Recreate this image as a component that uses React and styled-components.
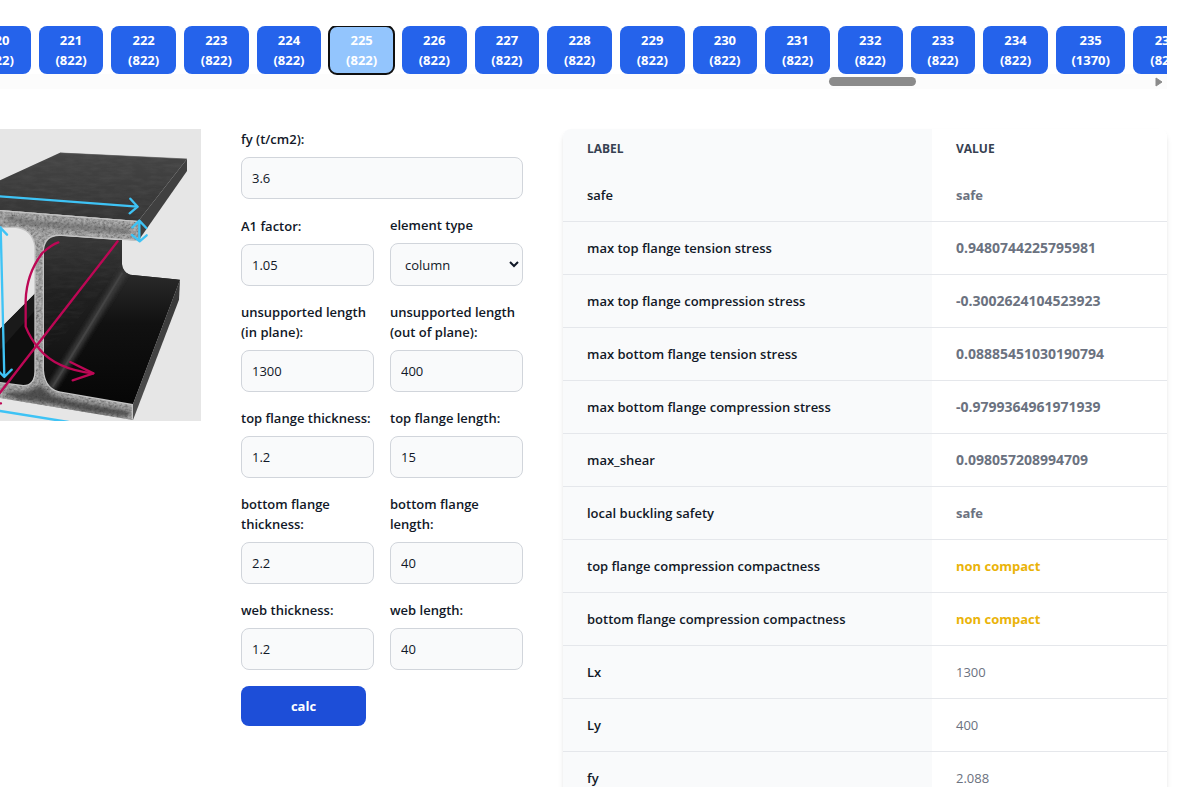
import React from "react";
import styled, { createGlobalStyle } from "styled-components";

const GlobalStyle = createGlobalStyle`
  *, *::before, *::after { box-sizing: border-box; }
  html { scrollbar-width: none; }
  body {
    margin: 0;
    background: #fff;
    color: #111827;
    font-family: "Segoe UI", "Open Sans", "Noto Sans", sans-serif;
    font-size: 13px;
    line-height: 20px;
    overflow-x: hidden;
  }
  button, input, select { font: inherit; color: inherit; margin: 0; }
`;

const Page = styled.div`
  padding: 26px 13px 0 0;
`;

const Strip = styled.nav`
  overflow: hidden;
`;

const CaseTrack = styled.div`
  display: flex;
  gap: 8px;
  margin: 0 -31px 0 -34px;
`;

const CaseButton = styled.button`
  flex: ${(p) => (p.$wide ? 70 : 65)} 1 0;
  min-width: 0;
  padding: 4px 0;
  border: 0;
  border-radius: 8px;
  background: ${(p) => (p.$active ? "#93c5fd" : "#2563eb")};
  color: #fff;
  font-size: 13px;
  font-weight: 700;
  text-align: center;
  outline: ${(p) => (p.$active ? "2px solid #101010" : "none")};
  outline-offset: -1px;
  span { display: block; }
`;

const ScrollBar = styled.div`
  display: grid;
  grid-template-columns: 829fr 87fr 239fr 8px;
  align-items: center;
  height: 15px;
  padding-right: 4px;
  background: #fcfcfc;
`;

const Thumb = styled.div`
  grid-column: 2;
  height: 9px;
  border-radius: 5px;
  background: #8b8b8b;
`;

const ScrollArrow = styled.svg`
  grid-column: 4;
  display: block;
`;

const Main = styled.main`
  display: grid;
  grid-template-columns: 201fr 282fr 604fr;
  gap: 40px;
  align-items: start;
  margin-top: 40px;
`;

const BeamSvg = styled.svg`
  display: block;
  width: 100%;
  height: auto;
`;

const Form = styled.form`
  display: grid;
  grid-template-columns: 1fr 1fr;
  gap: 16px;
  align-items: end;
`;

const Field = styled.div`
  grid-column: ${(p) => (p.$full ? "1 / -1" : "auto")};
  display: flex;
  flex-direction: column;
  gap: 8px;
  min-width: 0;
`;

const Label = styled.label`
  font-weight: 600;
`;

const Input = styled.input`
  width: 100%;
  height: 42px;
  padding: 10px;
  border: 1px solid #d1d5db;
  border-radius: 8px;
  background: #f9fafb;
`;

const Select = styled.select`
  width: 100%;
  height: 43px;
  padding: 10px 0 10px 10px;
  border: 1px solid #d1d5db;
  border-radius: 8px;
  background: #f9fafb;
`;

const CalcButton = styled.button`
  justify-self: start;
  width: 125px;
  height: 40px;
  border: 0;
  border-radius: 8px;
  background: #1d4ed8;
  color: #fff;
  font-weight: 700;
`;

const TableCard = styled.div`
  overflow: hidden;
  border-radius: 8px;
  box-shadow: 0 4px 6px -1px rgba(0, 0, 0, 0.1), 0 2px 4px -2px rgba(0, 0, 0, 0.1);
`;

const Table = styled.table`
  width: 100%;
  table-layout: fixed;
  border-collapse: separate;
  border-spacing: 0;
  text-align: left;
`;

const HeadCell = styled.th`
  width: ${(p) => (p.$shaded ? "auto" : "235px")};
  padding: 12px 24px;
  background: ${(p) => (p.$shaded ? "#f9fafb" : "#fff")};
  color: #374151;
  font-size: 12px;
  line-height: 16px;
  font-weight: 700;
  text-transform: uppercase;
`;

const RowLabel = styled.th`
  padding: 16px 24px;
  border-bottom: 1px solid #e5e7eb;
  background: #f9fafb;
  font-weight: 600;
  white-space: nowrap;
`;

const tones = {
  number: { color: "#6b7280", size: 14, weight: 700 },
  word: { color: "#6b7280", size: 13, weight: 700 },
  warn: { color: "#eab308", size: 13, weight: 700 },
  plain: { color: "#6b7280", size: 13, weight: 400 },
};

const RowValue = styled.td`
  padding: 16px 24px;
  border-bottom: 1px solid #e5e7eb;
  color: ${(p) => tones[p.$tone].color};
  font-size: ${(p) => tones[p.$tone].size}px;
  font-weight: ${(p) => tones[p.$tone].weight};
`;

const cases = Array.from({ length: 17 }, (_, i) => ({
  id: 220 + i,
  combo: 220 + i === 235 ? 1370 : 822,
}));

const fields = [
  { id: "fy", label: "fy (t/cm2):", value: "3.6", full: true },
  { id: "a1", label: "A1 factor:", value: "1.05" },
  { id: "type", label: "element type", options: ["column", "beam"] },
  { id: "lin", label: "unsupported length (in plane):", value: "1300" },
  { id: "lout", label: "unsupported length (out of plane):", value: "400" },
  { id: "tft", label: "top flange thickness:", value: "1.2" },
  { id: "tfl", label: "top flange length:", value: "15" },
  { id: "bft", label: "bottom flange thickness:", value: "2.2" },
  { id: "bfl", label: "bottom flange length:", value: "40" },
  { id: "wt", label: "web thickness:", value: "1.2" },
  { id: "wl", label: "web length:", value: "40" },
];

const results = [
  ["safe", "safe", "word"],
  ["max top flange tension stress", "0.9480744225795981", "number"],
  ["max top flange compression stress", "-0.3002624104523923", "number"],
  ["max bottom flange tension stress", "0.08885451030190794", "number"],
  ["max bottom flange compression stress", "-0.9799364961971939", "number"],
  ["max_shear", "0.098057208994709", "number"],
  ["local buckling safety", "safe", "word"],
  ["top flange compression compactness", "non compact", "warn"],
  ["bottom flange compression compactness", "non compact", "warn"],
  ["Lx", "1300", "plain"],
  ["Ly", "400", "plain"],
  ["fy", "2.088", "plain"],
];

const innerFace =
  "M130 395 Q150 375 185 377 L350 390 H366 V462 Q370 490 390 494 L540 509 L398 884 L185 848 Q140 840 131 790 Z";
const section =
  "M0 300 L415 333 V392 L185 376 Q135 372 130 420 V780 Q134 842 190 848 L398 884 L399 930 L0 864 V818 L70 827 Q104 826 105 785 V410 Q98 360 50 352 L0 352 Z";
const topFace = "M180 128 L561 147 L415 333 L0 300 V211 Z";

function BeamDrawing() {
  return (
    <BeamSvg viewBox="0 57 603 876" role="img" aria-label="I-beam section">
      <defs>
        <linearGradient id="topShade" x1="0" y1="0" x2="0" y2="1">
          <stop offset="0" stopColor="#454545" />
          <stop offset="1" stopColor="#343434" />
        </linearGradient>
        <linearGradient id="webShade" x1="0" y1="0" x2="0" y2="1">
          <stop offset="0" stopColor="#383838" />
          <stop offset="0.35" stopColor="#202020" />
          <stop offset="1" stopColor="#0b0b0b" />
        </linearGradient>
        <linearGradient id="lowerShade" x1="0" y1="0" x2="0" y2="1">
          <stop offset="0" stopColor="#2c2c2c" />
          <stop offset="0.4" stopColor="#111" />
          <stop offset="1" stopColor="#060606" />
        </linearGradient>
        <linearGradient id="edge" x1="0" y1="0" x2="0" y2="1">
          <stop offset="0" stopColor="#363636" />
          <stop offset="1" stopColor="#505050" />
        </linearGradient>
        <filter id="soft" x="-20%" y="-20%" width="140%" height="140%">
          <feGaussianBlur stdDeviation="7" />
        </filter>
        <filter id="steel" x="0" y="0" width="100%" height="100%">
          <feTurbulence type="fractalNoise" baseFrequency="0.12 0.14" numOctaves="3" seed="4" result="n" />
          <feColorMatrix in="n" type="matrix" values="1.2 0 0 0 -0.1  1.2 0 0 0 -0.1  1.2 0 0 0 -0.1  0 0 0 0 1" result="g" />
          <feComposite in="g" in2="SourceGraphic" operator="in" />
        </filter>
        <filter id="brushed" x="0" y="0" width="100%" height="100%">
          <feTurbulence type="fractalNoise" baseFrequency="0.02 0.08" numOctaves="3" seed="9" result="n" />
          <feColorMatrix in="n" type="matrix" values="0 0 0 0 0.5  0 0 0 0 0.5  0 0 0 0 0.5  0.7 0 0 0 -0.24" result="g" />
          <feComposite in="g" in2="SourceGraphic" operator="in" />
        </filter>
        <clipPath id="innerClip">
          <path d={innerFace} />
        </clipPath>
        <clipPath id="sectionClip">
          <path d={section} />
        </clipPath>
      </defs>
      <rect x="0" y="57" width="603" height="876" fill="#e6e6e6" />

      <path d="M0 656 L106 550 V780 Q104 828 70 828 L0 818 Z" fill="#0e0e0e" />
      <path d="M0 656 L106 550 V600 L0 720 Z" fill="#1a1a1a" />

      <path d={innerFace} fill="url(#webShade)" />
      <g clipPath="url(#innerClip)">
        <path d="M366 478 L150 826 L185 850 L398 884 L540 509 Z" fill="url(#lowerShade)" />
        <path d="M375 480 L150 840" stroke="#3a3a3a" strokeWidth="24" filter="url(#soft)" />
        <path d="M367 488 L158 830" stroke="#444" strokeWidth="6" />
        <path d="M131 400 L350 390 L366 470 L180 690 L131 720 Z" fill="#fff" filter="url(#brushed)" opacity="0.15" />
      </g>
      <path d="M540 509 L398 884 L399 930 L537 569 Z" fill="url(#edge)" />

      <path d={topFace} fill="url(#topShade)" />
      <path d={topFace} fill="#fff" filter="url(#brushed)" opacity="0.2" />
      <path d="M561 147 V183 L415 392 V333 Z" fill="#404040" />
      <path d="M180 129 L561 147" stroke="#555" strokeWidth="2" />

      <path d={section} fill="#7c7c7c" />
      <path d={section} fill="#fff" filter="url(#steel)" opacity="0.5" />
      <g clipPath="url(#sectionClip)">
        <path d="M20 850 L75 850 L120 832 L155 860 L205 874 L385 908 L380 916 L270 902 L160 878 L50 862 Z" fill="#333" stroke="#333" strokeWidth="10" opacity="0.75" filter="url(#soft)" />
        <path d="M20 325 L110 342 L230 350 L390 364" fill="none" stroke="#555" strokeWidth="16" opacity="0.6" filter="url(#soft)" />
        <path d="M117 540 V800" fill="none" stroke="#444" strokeWidth="8" opacity="0.5" filter="url(#soft)" />
      </g>
      <path
        d="M0 302 L415 335 M0 352 H48 Q98 358 105 410 V785 Q104 826 70 827 L0 818 M412 391 L185 376 Q135 372 130 420 V780 Q134 842 190 848 L397 884 V928"
        fill="none"
        stroke="#c4c4c4"
        strokeWidth="4"
      />

      <g fill="none" stroke="#3ec3f5" strokeWidth="7" strokeLinecap="round" strokeLinejoin="round">
        <path d="M0 259 L412 290 M391 266 L413 290 L389 310" />
        <path d="M418 334 V392 M397 352 L418 332 L439 354 M396 375 L419 394 L440 376" />
        <path d="M2 352 L13 800 M0 352 L21 374 M-6 782 L13 801 L35 779" />
        <path d="M0 903 L205 936" />
      </g>
      <g fill="none" stroke="#bd0755" strokeWidth="7" strokeLinecap="round" strokeLinejoin="round">
        <path d="M353 394 L0 848 M-4 880 H3" />
        <path d="M175 397 Q154 404 127 429 Q80 490 77 570 V650 Q91 686 118 717 Q168 778 280 790" />
        <path d="M211 756 L280 790 L218 811" />
      </g>
    </BeamSvg>
  );
}

export default function App() {
  return (
    <>
      <GlobalStyle />
      <Page>
        <Strip aria-label="Load cases">
          <CaseTrack>
            {cases.map((c) => (
              <CaseButton key={c.id} type="button" $active={c.id === 225} $wide={c.combo > 999}>
                <span>{c.id}</span>
                <span>({c.combo})</span>
              </CaseButton>
            ))}
          </CaseTrack>
          <ScrollBar>
            <Thumb />
            <ScrollArrow width="8" height="10" viewBox="0 0 8 10" aria-hidden="true">
              <path d="M1 1 L7 5 L1 9 Z" fill="#8b8b8b" stroke="#8b8b8b" strokeLinejoin="round" />
            </ScrollArrow>
          </ScrollBar>
        </Strip>

        <Main>
          <BeamDrawing />

          <Form onSubmit={(e) => e.preventDefault()}>
            {fields.map((f) => (
              <Field key={f.id} $full={f.full}>
                <Label htmlFor={f.id}>{f.label}</Label>
                {f.options ? (
                  <Select id={f.id} defaultValue={f.options[0]}>
                    {f.options.map((o) => (
                      <option key={o}>{o}</option>
                    ))}
                  </Select>
                ) : (
                  <Input id={f.id} type="text" defaultValue={f.value} />
                )}
              </Field>
            ))}
            <CalcButton type="submit">calc</CalcButton>
          </Form>

          <TableCard>
            <Table>
              <thead>
                <tr>
                  <HeadCell scope="col" $shaded>Label</HeadCell>
                  <HeadCell scope="col">Value</HeadCell>
                </tr>
              </thead>
              <tbody>
                {results.map(([label, value, tone]) => (
                  <tr key={label}>
                    <RowLabel scope="row">{label}</RowLabel>
                    <RowValue $tone={tone}>{value}</RowValue>
                  </tr>
                ))}
              </tbody>
            </Table>
          </TableCard>
        </Main>
      </Page>
    </>
  );
}
